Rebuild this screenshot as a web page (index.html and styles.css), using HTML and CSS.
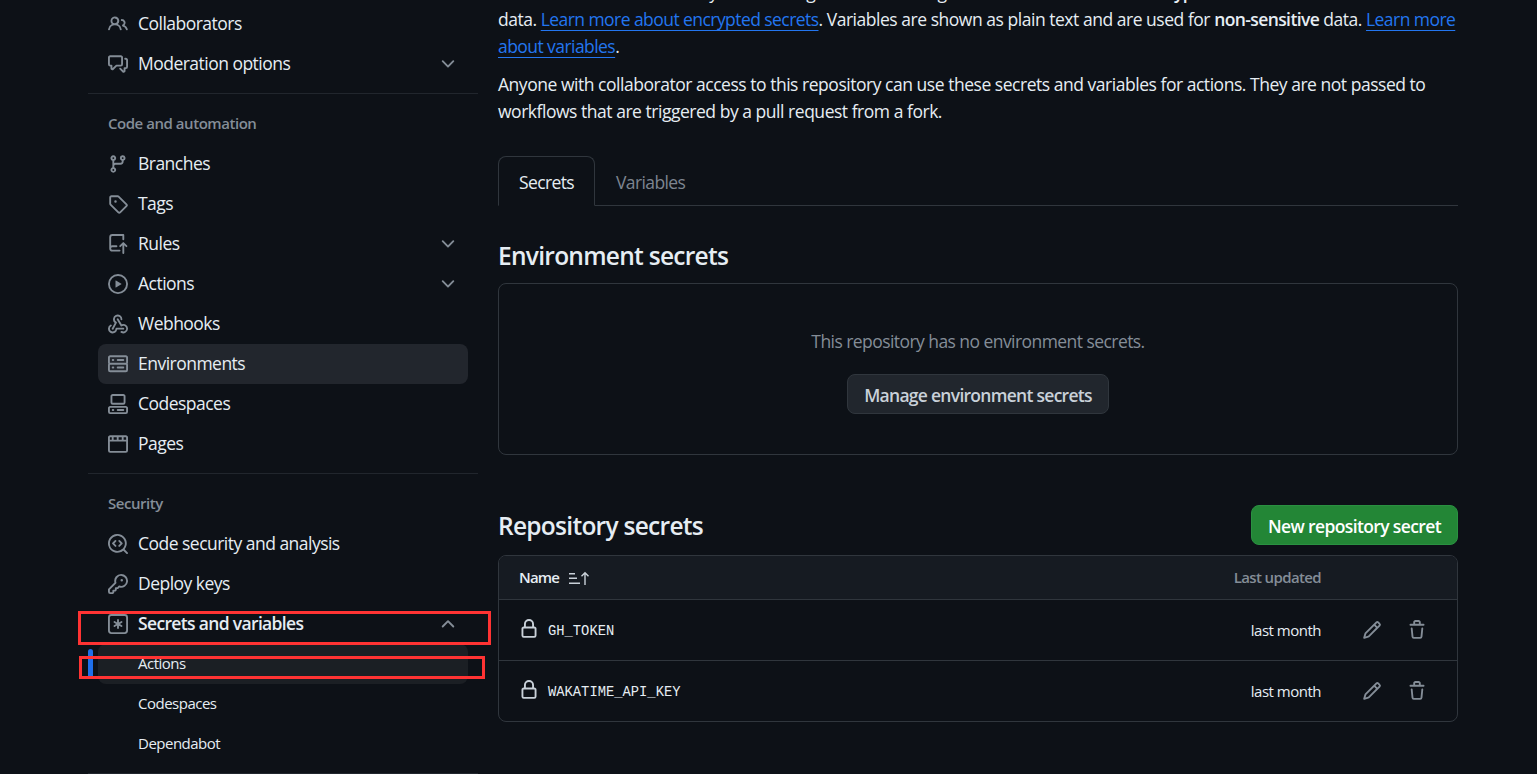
FILE: index.html
```html
<!DOCTYPE html>
<html lang="en">
<head>
<meta charset="utf-8">
<title>Actions secrets and variables</title>
<link rel="stylesheet" href="styles.css">
</head>
<body>
<svg class="sprite" aria-hidden="true">
  <symbol id="i-people" viewBox="0 0 16 16"><path d="M2 5.5a3.5 3.5 0 1 1 5.898 2.549 5.508 5.508 0 0 1 3.034 4.084.75.75 0 1 1-1.482.235 4 4 0 0 0-7.9 0 .75.75 0 0 1-1.482-.236A5.507 5.507 0 0 1 3.102 8.05 3.493 3.493 0 0 1 2 5.5ZM11 4a3.001 3.001 0 0 1 2.22 5.018 5.01 5.01 0 0 1 2.56 3.012.749.749 0 0 1-.885.954.752.752 0 0 1-.549-.514 3.507 3.507 0 0 0-2.522-2.372.75.75 0 0 1-.574-.73v-.352a.75.75 0 0 1 .416-.672A1.5 1.5 0 0 0 11 5.5.75.75 0 0 1 11 4Zm-5.5-.5a2 2 0 1 0-.001 3.999A2 2 0 0 0 5.5 3.5Z"/></symbol>
  <symbol id="i-discussion" viewBox="0 0 16 16"><path d="M1.75 1h8.5c.966 0 1.75.784 1.75 1.75v5.5A1.75 1.75 0 0 1 10.25 10H7.061l-2.574 2.573A1.458 1.458 0 0 1 2 11.543V10h-.25A1.75 1.75 0 0 1 0 8.25v-5.5C0 1.784.784 1 1.75 1ZM1.5 2.75v5.5c0 .138.112.25.25.25h1a.75.75 0 0 1 .75.75v2.19l2.72-2.72a.749.749 0 0 1 .53-.22h3.5a.25.25 0 0 0 .25-.25v-5.5a.25.25 0 0 0-.25-.25h-8.5a.25.25 0 0 0-.25.25Zm13 2a.25.25 0 0 0-.25-.25h-.5a.75.75 0 0 1 0-1.5h.5c.966 0 1.75.784 1.75 1.75v5.5A1.75 1.75 0 0 1 14.25 12H14v1.543a1.458 1.458 0 0 1-2.487 1.03L9.22 12.28a.749.749 0 0 1 .326-1.275.749.749 0 0 1 .734.215l2.22 2.22v-2.19a.75.75 0 0 1 .75-.75h1a.25.25 0 0 0 .25-.25Z"/></symbol>
  <symbol id="i-branch" viewBox="0 0 16 16"><path d="M9.5 3.25a2.25 2.25 0 1 1 3 2.122V6A2.5 2.5 0 0 1 10 8.5H6a1 1 0 0 0-1 1v1.128a2.251 2.251 0 1 1-1.5 0V5.372a2.25 2.25 0 1 1 1.5 0v1.836A2.493 2.493 0 0 1 6 7h4a1 1 0 0 0 1-1v-.628A2.25 2.25 0 0 1 9.5 3.25Zm-6 0a.75.75 0 1 0 1.5 0 .75.75 0 0 0-1.5 0Zm8.25-.75a.75.75 0 1 0 0 1.5.75.75 0 0 0 0-1.5ZM4.25 12a.75.75 0 1 0 0 1.5.75.75 0 0 0 0-1.5Z"/></symbol>
  <symbol id="i-tag" viewBox="0 0 16 16"><path d="M1 7.775V2.75C1 1.784 1.784 1 2.75 1h5.025c.464 0 .91.184 1.238.513l6.25 6.25a1.75 1.75 0 0 1 0 2.474l-5.026 5.026a1.75 1.75 0 0 1-2.474 0l-6.25-6.25A1.752 1.752 0 0 1 1 7.775Zm1.5 0c0 .066.026.13.073.177l6.25 6.25a.25.25 0 0 0 .354 0l5.025-5.025a.25.25 0 0 0 0-.354l-6.25-6.25a.25.25 0 0 0-.177-.073H2.75a.25.25 0 0 0-.25.25ZM6 5a1 1 0 1 1 0 2 1 1 0 0 1 0-2Z"/></symbol>
  <symbol id="i-repo-push" viewBox="0 0 16 16"><path d="M1 2.5A2.5 2.5 0 0 1 3.5 0h8.75a.75.75 0 0 1 .75.75v3.5a.75.75 0 0 1-1.5 0V1.5h-8a1 1 0 0 0-1 1v6.708A2.486 2.486 0 0 1 3.5 9h3.25a.75.75 0 0 1 0 1.5H3.5a1 1 0 0 0 0 2h5.75a.75.75 0 0 1 0 1.5H3.5A2.5 2.5 0 0 1 1 11.5Zm13.23 7.79h-.001l-1.224-1.224v6.184a.75.75 0 0 1-1.5 0V9.066L10.28 10.29a.75.75 0 0 1-1.06-1.061l2.505-2.504a.75.75 0 0 1 1.06 0L15.29 9.23a.751.751 0 0 1-.018 1.042.751.751 0 0 1-1.042.018Z"/></symbol>
  <symbol id="i-play" viewBox="0 0 16 16"><path d="M8 0a8 8 0 1 1 0 16A8 8 0 0 1 8 0ZM1.5 8a6.5 6.5 0 1 0 13 0 6.5 6.5 0 0 0-13 0Zm4.879-2.773 4.264 2.559a.25.25 0 0 1 0 .428l-4.264 2.559A.25.25 0 0 1 6 10.559V5.442a.25.25 0 0 1 .379-.215Z"/></symbol>
  <symbol id="i-webhook" viewBox="0 0 16 16"><path d="M5.5 4.25a2.25 2.25 0 0 1 4.5 0 .75.75 0 0 0 1.5 0 3.75 3.75 0 1 0-6.14 2.889l-2.272 4.258a.75.75 0 0 0 1.324.706L7 7.25a.75.75 0 0 0-.309-1.015A2.25 2.25 0 0 1 5.5 4.25Z"/><path d="M7.364 3.607a.75.75 0 0 1 1.03.257l2.608 4.349a3.75 3.75 0 1 1-.628 6.785.75.75 0 0 1 .752-1.299 2.25 2.25 0 1 0-.033-3.88.75.75 0 0 1-1.03-.256L7.107 4.636a.75.75 0 0 1 .257-1.03Z"/><path d="M2.9 8.776A.75.75 0 0 1 2.625 9.8 2.25 2.25 0 1 0 6 11.75a.75.75 0 0 1 .75-.751h5.5a.75.75 0 0 1 0 1.5H7.425a3.751 3.751 0 1 1-5.55-3.998.75.75 0 0 1 1.024.274Z"/></symbol>
  <symbol id="i-server" viewBox="0 0 16 16"><path d="M1.75 1h12.5c.966 0 1.75.784 1.75 1.75v4c0 .372-.116.717-.314 1 .198.283.314.628.314 1v4a1.75 1.75 0 0 1-1.75 1.75H1.75A1.75 1.75 0 0 1 0 12.75v-4c0-.372.116-.717.314-1a1.739 1.739 0 0 1-.314-1v-4C0 1.784.784 1 1.75 1ZM1.5 2.75v4c0 .138.112.25.25.25h12.5a.25.25 0 0 0 .25-.25v-4a.25.25 0 0 0-.25-.25H1.75a.25.25 0 0 0-.25.25Zm.25 5.75a.25.25 0 0 0-.25.25v4c0 .138.112.25.25.25h12.5a.25.25 0 0 0 .25-.25v-4a.25.25 0 0 0-.25-.25ZM7 4.75A.75.75 0 0 1 7.75 4h4.5a.75.75 0 0 1 0 1.5h-4.5A.75.75 0 0 1 7 4.75ZM7.75 10h4.5a.75.75 0 0 1 0 1.5h-4.5a.75.75 0 0 1 0-1.5ZM3 4.75A.75.75 0 0 1 3.75 4h.5a.75.75 0 0 1 0 1.5h-.5A.75.75 0 0 1 3 4.75ZM3.75 10h.5a.75.75 0 0 1 0 1.5h-.5a.75.75 0 0 1 0-1.5Z"/></symbol>
  <symbol id="i-codespaces" viewBox="0 0 16 16"><path d="M0 11.25c0-.966.784-1.75 1.75-1.75h12.5c.966 0 1.75.784 1.75 1.75v3A1.75 1.75 0 0 1 14.25 16H1.75A1.75 1.75 0 0 1 0 14.25Zm2-9.5C2 .784 2.784 0 3.75 0h8.5C13.216 0 14 .784 14 1.75v5a1.75 1.75 0 0 1-1.75 1.75h-8.5A1.75 1.75 0 0 1 2 6.75Zm1.75-.25a.25.25 0 0 0-.25.25v5c0 .138.112.25.25.25h8.5a.25.25 0 0 0 .25-.25v-5a.25.25 0 0 0-.25-.25Zm-2 9.5a.25.25 0 0 0-.25.25v3c0 .138.112.25.25.25h12.5a.25.25 0 0 0 .25-.25v-3a.25.25 0 0 0-.25-.25Z"/><path d="M7 12.75a.75.75 0 0 1 .75-.75h4.5a.75.75 0 0 1 0 1.5h-4.5a.75.75 0 0 1-.75-.75Zm-4 0a.75.75 0 0 1 .75-.75h.5a.75.75 0 0 1 0 1.5h-.5a.75.75 0 0 1-.75-.75Z"/></symbol>
  <symbol id="i-browser" viewBox="0 0 16 16"><path d="M0 2.75C0 1.784.784 1 1.75 1h12.5c.966 0 1.75.784 1.75 1.75v10.5A1.75 1.75 0 0 1 14.25 15H1.75A1.75 1.75 0 0 1 0 13.25ZM14.5 6h-13v7.25c0 .138.112.25.25.25h12.5a.25.25 0 0 0 .25-.25Zm-6-3.5v2H11v-2Zm-1.5 2v-2H4.5v2ZM3 2.5H1.75a.25.25 0 0 0-.25.25V4.5H3Zm9.5 0v2h2V2.75a.25.25 0 0 0-.25-.25Z"/></symbol>
  <symbol id="i-codescan" viewBox="0 0 16 16"><path d="M8.47 4.97a.75.75 0 0 0 0 1.06L9.94 7.5 8.47 8.97a.75.75 0 1 0 1.06 1.06l2-2a.75.75 0 0 0 0-1.06l-2-2a.75.75 0 0 0-1.06 0ZM6.53 6.03a.75.75 0 0 0-1.06-1.06l-2 2a.75.75 0 0 0 0 1.06l2 2a.75.75 0 1 0 1.06-1.06L5.06 7.5l1.47-1.47Z"/><path d="M12.246 13.307a7.501 7.501 0 1 1 1.06-1.06l2.474 2.473a.749.749 0 0 1-.326 1.275.749.749 0 0 1-.734-.215ZM1.5 7.5a6.002 6.002 0 0 0 3.608 5.504 6.002 6.002 0 0 0 6.486-1.117.748.748 0 0 1 .292-.293A6 6 0 1 0 1.5 7.5Z"/></symbol>
  <symbol id="i-key" viewBox="0 0 16 16"><path d="M10.5 0a5.499 5.499 0 1 1-1.288 10.848l-.932.932a.749.749 0 0 1-.53.22H7v.75a.749.749 0 0 1-.22.53l-.5.5a.749.749 0 0 1-.53.22H5v.75a.749.749 0 0 1-.22.53l-.5.5a.749.749 0 0 1-.53.22h-2A1.75 1.75 0 0 1 0 14.25v-2c0-.199.079-.389.22-.53l4.932-4.932A5.5 5.5 0 0 1 10.5 0Zm-4 5.5c-.001.431.069.86.205 1.269a.75.75 0 0 1-.181.768L1.5 12.56v1.69c0 .138.112.25.25.25h1.69l.06-.06v-1.19a.75.75 0 0 1 .75-.75h1.19l.06-.06v-1.19a.75.75 0 0 1 .75-.75h1.19l1.023-1.025a.75.75 0 0 1 .768-.18A4 4 0 1 0 6.5 5.5ZM11 6a1 1 0 1 1 0-2 1 1 0 0 1 0 2Z"/></symbol>
  <symbol id="i-asterisk" viewBox="0 0 16 16"><path d="M0 2.75A2.75 2.75 0 0 1 2.75 0h10.5A2.75 2.75 0 0 1 16 2.75v10.5A2.75 2.75 0 0 1 13.25 16H2.75A2.75 2.75 0 0 1 0 13.25ZM2.75 1.5c-.69 0-1.25.56-1.25 1.25v10.5c0 .69.56 1.25 1.25 1.25h10.5c.69 0 1.25-.56 1.25-1.25V2.75c0-.69-.56-1.25-1.25-1.25Z"/><path d="M8 4a.75.75 0 0 1 .75.75V6.7l1.69-.975a.75.75 0 0 1 .75 1.3L9.5 8l1.69.976a.75.75 0 0 1-.75 1.298L8.75 9.3v1.951a.75.75 0 0 1-1.5 0V9.299l-1.69.976a.75.75 0 0 1-.75-1.3L6.5 8l-1.69-.975a.75.75 0 0 1 .75-1.3l1.69.976V4.75A.75.75 0 0 1 8 4Z"/></symbol>
  <symbol id="i-down" viewBox="0 0 16 16"><path d="M12.78 5.22a.749.749 0 0 1 0 1.06l-4.25 4.25a.749.749 0 0 1-1.06 0L3.22 6.28a.749.749 0 1 1 1.06-1.06L8 8.939l3.72-3.719a.749.749 0 0 1 1.06 0Z"/></symbol>
  <symbol id="i-up" viewBox="0 0 16 16"><path d="M3.22 10.53a.749.749 0 0 1 0-1.06l4.25-4.25a.749.749 0 0 1 1.06 0l4.25 4.25a.749.749 0 1 1-1.06 1.06L8 6.811 4.28 10.53a.749.749 0 0 1-1.06 0Z"/></symbol>
  <symbol id="i-lock" viewBox="0 0 16 16"><path d="M4 4a4 4 0 0 1 8 0v2h.25c.966 0 1.75.784 1.75 1.75v5.5A1.75 1.75 0 0 1 12.25 15h-8.5A1.75 1.75 0 0 1 2 13.25v-5.5C2 6.784 2.784 6 3.75 6H4Zm8.25 3.5h-8.5a.25.25 0 0 0-.25.25v5.5c0 .138.112.25.25.25h8.5a.25.25 0 0 0 .25-.25v-5.5a.25.25 0 0 0-.25-.25ZM10.5 6V4a2.5 2.5 0 1 0-5 0v2Z"/></symbol>
  <symbol id="i-pencil" viewBox="0 0 16 16"><path d="M11.013 1.427a1.75 1.75 0 0 1 2.474 0l1.086 1.086a1.75 1.75 0 0 1 0 2.474l-8.61 8.61c-.21.21-.47.364-.756.445l-3.251.93a.75.75 0 0 1-.927-.928l.929-3.25c.081-.286.235-.547.445-.758l8.61-8.61Zm.176 4.823L9.75 4.81l-6.286 6.287a.253.253 0 0 0-.064.108l-.558 1.953 1.953-.558a.253.253 0 0 0 .108-.064Zm1.238-3.763a.25.25 0 0 0-.354 0L10.811 3.75l1.439 1.44 1.263-1.263a.25.25 0 0 0 0-.354Z"/></symbol>
  <symbol id="i-trash" viewBox="0 0 16 16"><path d="M11 1.75V3h2.25a.75.75 0 0 1 0 1.5H2.75a.75.75 0 0 1 0-1.5H5V1.75C5 .784 5.784 0 6.75 0h2.5C10.216 0 11 .784 11 1.75ZM4.496 6.675l.66 6.6a.25.25 0 0 0 .249.225h5.19a.25.25 0 0 0 .249-.225l.66-6.6a.75.75 0 0 1 1.492.149l-.66 6.6A1.748 1.748 0 0 1 10.595 15h-5.19a1.75 1.75 0 0 1-1.741-1.575l-.66-6.6a.75.75 0 1 1 1.492-.15ZM6.5 1.75V3h3V1.75a.25.25 0 0 0-.25-.25h-2.5a.25.25 0 0 0-.25.25Z"/></symbol>
  <symbol id="i-sort" viewBox="0 0 21 14"><path d="M1 2h6v1.4H1ZM1 6.5h8v1.4H1ZM1 11.5h11v1.4H1ZM17 .8l4 4-1 1-2.3-2.3V14h-1.4V3.5L14 5.8l-1-1Z"/></symbol>
</svg>

<div class="page">
  <nav class="sidebar">
    <a class="item"><svg class="icon"><use href="#i-people"/></svg><span>Collaborators</span></a>
    <a class="item"><svg class="icon"><use href="#i-discussion"/></svg><span>Moderation options</span><svg class="icon chevron"><use href="#i-down"/></svg></a>
    <hr class="rule">
    <div class="group-title">Code and automation</div>
    <a class="item"><svg class="icon"><use href="#i-branch"/></svg><span>Branches</span></a>
    <a class="item"><svg class="icon"><use href="#i-tag"/></svg><span>Tags</span></a>
    <a class="item"><svg class="icon"><use href="#i-repo-push"/></svg><span>Rules</span><svg class="icon chevron"><use href="#i-down"/></svg></a>
    <a class="item"><svg class="icon"><use href="#i-play"/></svg><span>Actions</span><svg class="icon chevron"><use href="#i-down"/></svg></a>
    <a class="item"><svg class="icon"><use href="#i-webhook"/></svg><span>Webhooks</span></a>
    <a class="item hovered"><svg class="icon"><use href="#i-server"/></svg><span>Environments</span></a>
    <a class="item"><svg class="icon"><use href="#i-codespaces"/></svg><span>Codespaces</span></a>
    <a class="item"><svg class="icon"><use href="#i-browser"/></svg><span>Pages</span></a>
    <hr class="rule">
    <div class="group-title">Security</div>
    <a class="item"><svg class="icon"><use href="#i-codescan"/></svg><span>Code security and analysis</span></a>
    <a class="item"><svg class="icon"><use href="#i-key"/></svg><span>Deploy keys</span></a>
    <a class="item open"><svg class="icon"><use href="#i-asterisk"/></svg><span>Secrets and variables</span><svg class="icon chevron"><use href="#i-up"/></svg></a>
    <a class="item sub current"><span>Actions</span></a>
    <a class="item sub"><span>Codespaces</span></a>
    <a class="item sub"><span>Dependabot</span></a>
    <hr class="rule">
  </nav>

  <main class="content">
    <p class="intro">Secrets and variables allow you to manage reusable configuration data. Secrets are <strong>encrypted</strong> and are used for sensitive data. <a class="link">Learn more about encrypted secrets</a>. Variables are shown as plain text and are used for <strong>non-sensitive</strong> data. <a class="link">Learn more about variables</a>.</p>
    <p class="intro second">Anyone with collaborator access to this repository can use these secrets and variables for actions. They are not passed to workflows that are triggered by a pull request from a fork.</p>

    <div class="tabs">
      <a class="tab selected">Secrets</a>
      <a class="tab">Variables</a>
    </div>

    <h2 class="section-title env-title">Environment secrets</h2>
    <section class="blank">
      <p class="blank-text">This repository has no environment secrets.</p>
      <a class="btn">Manage environment secrets</a>
    </section>

    <div class="repo-head">
      <h2 class="section-title">Repository secrets</h2>
      <a class="btn primary">New repository secret</a>
    </div>
    <section class="table">
      <div class="thead">
        <span class="th-name">Name</span>
        <svg class="sort"><use href="#i-sort"/></svg>
        <span class="th-updated">Last updated</span>
      </div>
      <div class="row">
        <svg class="icon lock"><use href="#i-lock"/></svg>
        <code class="secret">GH_TOKEN</code>
        <span class="updated">last month</span>
        <svg class="icon action"><use href="#i-pencil"/></svg>
        <svg class="icon action"><use href="#i-trash"/></svg>
      </div>
      <div class="row">
        <svg class="icon lock"><use href="#i-lock"/></svg>
        <code class="secret">WAKATIME_API_KEY</code>
        <span class="updated">last month</span>
        <svg class="icon action"><use href="#i-pencil"/></svg>
        <svg class="icon action"><use href="#i-trash"/></svg>
      </div>
    </section>
  </main>
</div>

<div class="mark mark-group"></div>
<div class="mark mark-item"></div>
</body>
</html>
```

FILE: styles.css
```css
* { box-sizing: border-box; }

html, body {
  margin: 0;
  height: 774px;
  overflow: hidden;
  background: #0d1117;
}

body {
  color: #e6edf3;
  font-family: "Open Sans", "Noto Sans", sans-serif;
  font-size: 17.5px;
  letter-spacing: -0.47px;
}

.sprite { display: none; }

.page {
  display: flex;
  gap: 20px;
  margin-left: 88px;
  width: 1370px;
}

.sidebar {
  flex: 0 0 390px;
  padding-top: 4px;
}

.item {
  position: relative;
  display: flex;
  align-items: center;
  gap: 10px;
  height: 40px;
  margin: 0 10px;
  padding: 0 10px;
  border-radius: 8px;
  letter-spacing: -0.52px;
}

.item span { margin-bottom: 2px; }

.item.hovered { background: #22262d; }

.item.open {
  font-weight: 600;
  letter-spacing: -0.66px;
}

.item.sub {
  padding-left: 40px;
  font-size: 15px;
  letter-spacing: -0.5px;
}

.item.current { background: #1b1f24; }

.item.current::before {
  content: "";
  position: absolute;
  left: -10px;
  top: 5px;
  width: 5px;
  height: 30px;
  border-radius: 5px;
  background: #1f6feb;
}

.icon {
  flex: none;
  width: 20px;
  height: 20px;
  fill: #848d97;
}

.chevron { margin-left: auto; }

.rule {
  height: 1px;
  margin: 9px 0 10px;
  border: 0;
  background: #21262d;
}

.group-title {
  display: flex;
  align-items: center;
  height: 38px;
  margin-bottom: 2px;
  padding-left: 20px;
  color: #848d97;
  font-size: 15px;
  font-weight: 600;
  letter-spacing: -0.46px;
}

.content {
  flex: 0 0 960px;
}

.intro {
  margin: 0;
  line-height: 27px;
}

.intro:first-child { margin-top: -21px; }
.intro.second { margin-top: 11px; }

.intro strong {
  font-weight: 600;
  letter-spacing: -0.6px;
}

.link {
  color: #2376f0;
  letter-spacing: -0.56px;
  text-decoration: underline;
  text-decoration-thickness: 1px;
  text-underline-offset: 4px;
}

.tabs {
  display: flex;
  height: 50px;
  margin-top: 31px;
  border-bottom: 1px solid #30363d;
}

.tab {
  display: flex;
  align-items: center;
  height: 50px;
  padding: 1px 20px 0;
  color: #7d8590;
  border: 1px solid transparent;
  border-radius: 8px 8px 0 0;
  letter-spacing: -0.62px;
}

.tab.selected {
  color: #e6edf3;
  background: #0d1117;
  border-color: #30363d #30363d #0d1117;
}

.section-title {
  height: 40px;
  margin: 0;
  padding-top: 1px;
  font-size: 24.5px;
  font-weight: 600;
  line-height: 40px;
  letter-spacing: -0.72px;
}

.env-title { margin-top: 29px; }

.blank {
  display: flex;
  flex-direction: column;
  align-items: center;
  height: 172px;
  margin-top: 8px;
  padding-top: 44px;
  border: 1px solid #30363d;
  border-radius: 8px;
}

.blank-text {
  margin: 0 0 20px;
  color: #848d97;
  line-height: 26px;
  letter-spacing: -0.56px;
}

.btn {
  display: flex;
  align-items: center;
  justify-content: center;
  height: 40px;
  padding: 2px 16px 0;
  color: #c9d1d9;
  background: #21262d;
  border: 1px solid #30363d;
  border-radius: 8px;
  font-weight: 600;
  letter-spacing: -0.72px;
}

.btn.primary {
  color: #ffffff;
  background: #238636;
  border-color: #2a9141;
  letter-spacing: -0.62px;
}

.repo-head {
  display: flex;
  align-items: center;
  justify-content: space-between;
  margin-top: 50px;
}

.table {
  margin-top: 10px;
  border: 1px solid #30363d;
  border-radius: 8px;
  overflow: hidden;
}

.thead {
  display: flex;
  align-items: center;
  height: 43px;
  padding: 0 136px 0 20px;
  background: #161b22;
  font-size: 15px;
}

.th-name {
  margin-bottom: 2px;
  font-weight: 600;
  letter-spacing: -0.8px;
}

.sort {
  width: 21px;
  height: 14px;
  margin-left: 9px;
  fill: #c9d1d9;
}

.th-updated {
  margin-left: auto;
  margin-bottom: 2px;
  color: #848d97;
  font-weight: 600;
  letter-spacing: -0.63px;
}

.row {
  display: flex;
  align-items: center;
  height: 61px;
  padding: 0 30px 0 20px;
  border-top: 1px solid #30363d;
}

.lock {
  margin-top: -2px;
  fill: #c9d1d9;
}

.secret {
  margin-top: 2px;
  margin-left: 9px;
  font-family: "Liberation Mono", monospace;
  font-size: 13.8px;
  letter-spacing: 0;
}

.updated {
  margin-left: auto;
  margin-right: 41px;
  font-size: 15px;
  letter-spacing: -0.5px;
}

.action { margin-left: 25px; }
.updated + .action { margin-left: 0; }

.mark {
  position: absolute;
  border: 3px solid #ff3333;
}

.mark-group {
  left: 78px;
  top: 611px;
  width: 413px;
  height: 34px;
}

.mark-item {
  left: 79px;
  top: 656px;
  width: 406px;
  height: 23px;
}
```
